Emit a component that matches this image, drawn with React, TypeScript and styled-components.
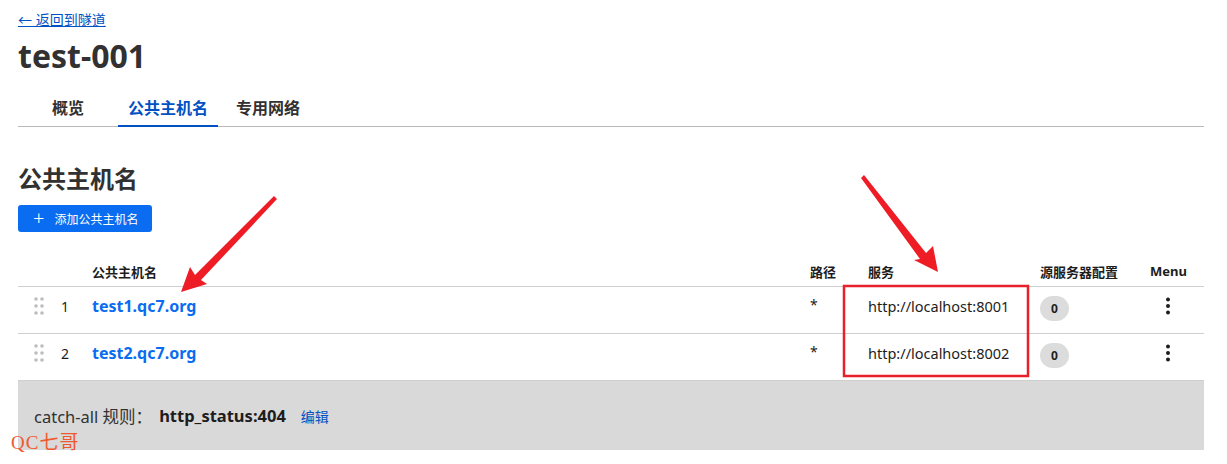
import React from "react";
import styled, {createGlobalStyle} from "styled-components";

const GlobalStyle = createGlobalStyle`
  body {
    margin: 0;
    background: #fff;
    font-family: "Noto Sans", "Noto Sans CJK SC", sans-serif;
    color: #313131;
  }
`;

const rows = [
	{id: 1, host: "test1.qc7.org", path: "*", service: "http://localhost:8001", origin: 0},
	{id: 2, host: "test2.qc7.org", path: "*", service: "http://localhost:8002", origin: 0},
];

const DragHandle = () => (
	<svg width="10" height="20" viewBox="0 0 10 20">
		{[3, 10, 17].map(y => (
			<React.Fragment key={y}>
				<circle cx="2" cy={y} r="1.8" fill="#bdbdbd" />
				<circle cx="8" cy={y} r="1.8" fill="#bdbdbd" />
			</React.Fragment>
		))}
	</svg>
);

const Kebab = () => (
	<svg width="6" height="18" viewBox="0 0 6 18">
		<circle cx="3" cy="2.5" r="2" fill="#1d1d1d" />
		<circle cx="3" cy="9" r="2" fill="#1d1d1d" />
		<circle cx="3" cy="15.5" r="2" fill="#1d1d1d" />
	</svg>
);

export default function App() {
	return (
		<Page>
			<GlobalStyle />
			<BackLink href="#">← 返回到隧道</BackLink>
			<Title>test-001</Title>
			<Tabs>
				<Tab>概览</Tab>
				<Tab active>公共主机名</Tab>
				<Tab>专用网络</Tab>
			</Tabs>

			<SectionTitle>公共主机名</SectionTitle>
			<AddButton>
				<Plus>+</Plus>
				添加公共主机名
			</AddButton>

			<Table>
				<HeadRow>
					<span />
					<span>公共主机名</span>
					<span>路径</span>
					<span>服务</span>
					<span>源服务器配置</span>
					<span>Menu</span>
				</HeadRow>
				{rows.map(r => (
					<Row key={r.id}>
						<IndexCell>
							<DragHandle />
							<span>{r.id}</span>
						</IndexCell>
						<Host>{r.host}</Host>
						<Path>{r.path}</Path>
						<Service>{r.service}</Service>
						<span><Badge>{r.origin}</Badge></span>
						<MenuCell><Kebab /></MenuCell>
					</Row>
				))}
			</Table>

			<CatchAll>
				<span>catch-all 规则：</span>
				<strong>http_status:404</strong>
				<EditLink href="#">编辑</EditLink>
			</CatchAll>

			{/* annotations drawn on top of the screenshot */}
			<Annotations width="1227" height="464" viewBox="0 0 1227 464">
				<g fill="#ee1c25">
					<polygon points="274,196 195,275 190,267 181,292 207,284 201,280 277,199" />
					<polygon points="864,175 926,253 933,246 938,272 914,260 920,259 861,178" />
				</g>
				<rect x="844" y="286" width="184" height="90" fill="none" stroke="#e8202a" strokeWidth="2.5" />
			</Annotations>
			<Watermark>QC七哥</Watermark>
		</Page>
	);
}

const Page = styled.div`
	position: relative;
	padding: 8px 23px 14px 18px;
	width: 1227px;
	height: 464px;
	box-sizing: border-box;
	overflow: hidden;
`;

const BackLink = styled.a`
	display: inline-block;
	font-size: 14px;
	line-height: 20px;
	color: #0051c3;
	text-decoration: underline;
`;

const Title = styled.h1`
	margin: 4px 0 0;
	font-size: 32px;
	line-height: 44px;
	font-weight: 700;
	color: #313131;
`;

const Tabs = styled.div`
	display: flex;
	gap: 8px;
	padding-left: 24px;
	margin-top: 14px;
	border-bottom: 1px solid #b8b8b8;
`;

const Tab = styled.div<{active?: boolean}>`
	padding: 5px 10px 6px;
	font-size: 16px;
	line-height: 22px;
	font-weight: 700;
	color: ${({active}) => (active ? "#0051c3" : "#313131")};
	border-bottom: 2px solid ${({active}) => (active ? "#0051c3" : "transparent")};
	margin-bottom: -1px;

	&:first-child {
		margin-right: 16px;
	}
`;

const SectionTitle = styled.h2`
	margin: 36px 0 0;
	font-size: 24px;
	line-height: 32px;
	font-weight: 700;
`;

const AddButton = styled.button`
	display: flex;
	align-items: center;
	gap: 10px;
	margin-top: 10px;
	height: 27px;
	padding: 0 14px 0 15px;
	border: none;
	border-radius: 3px;
	background: #0a6cf0;
	color: #fff;
	font-family: inherit;
	font-size: 12px;
`;

const Plus = styled.span`
	font-size: 20px;
	line-height: 20px;
	font-weight: 300;
	margin-top: -2px;
`;

const Table = styled.div`
	margin-top: 24px;
`;

const grid = `
	display: grid;
	grid-template-columns: 74px 1fr 58px 172px 110px 54px;
	align-items: center;
`;

const HeadRow = styled.div`
	${grid};
	height: 30px;
	font-size: 13px;
	font-weight: 700;
	color: #1d1d1d;
	border-bottom: 1px solid #cfcfcf;
`;

const Row = styled.div`
	${grid};
	height: 46px;
	font-size: 13px;
	color: #1d1d1d;
	border-bottom: 1px solid #cfcfcf;

	& > * {
		margin-bottom: 8px;
	}
`;

const IndexCell = styled.div`
	display: flex;
	align-items: center;
	gap: 17px;
	padding-left: 16px;
	font-size: 14px;
`;

const Host = styled.a`
	font-size: 16px;
	font-weight: 700;
	color: #0a6cf0;
	text-decoration: none;
`;

const Path = styled.span`
	font-size: 14px;
	margin-top: -4px;
`;

const Service = styled.span`
	font-size: 14.5px;
`;

const Badge = styled.span`
	display: inline-flex;
	align-items: center;
	justify-content: center;
	width: 29px;
	height: 25px;
	margin-top: 4px;
	border-radius: 13px;
	background: #dcdcdc;
	font-size: 12px;
	font-weight: 700;
`;

const MenuCell = styled.span`
	padding-left: 15px;
	display: flex;
`;

const CatchAll = styled.div`
	display: flex;
	align-items: center;
	height: 69px;
	padding: 0 16px;
	background: #d9d9d9;
	font-size: 16.5px;
	color: #313131;

	strong {
		margin-left: 7px;
		font-weight: 700;
		color: #1d1d1d;
	}
`;

const EditLink = styled.a`
	margin-left: 15px;
	font-size: 14px;
	color: #0051c3;
	text-decoration: none;
`;

const Annotations = styled.svg`
	position: absolute;
	left: 0;
	top: 0;
	pointer-events: none;
`;

const Watermark = styled.div`
	position: absolute;
	left: 11px;
	top: 427px;
	font-family: "Liberation Serif", "Noto Sans CJK SC", serif;
	font-size: 19px;
	letter-spacing: 1px;
	color: #f0582f;
`;
